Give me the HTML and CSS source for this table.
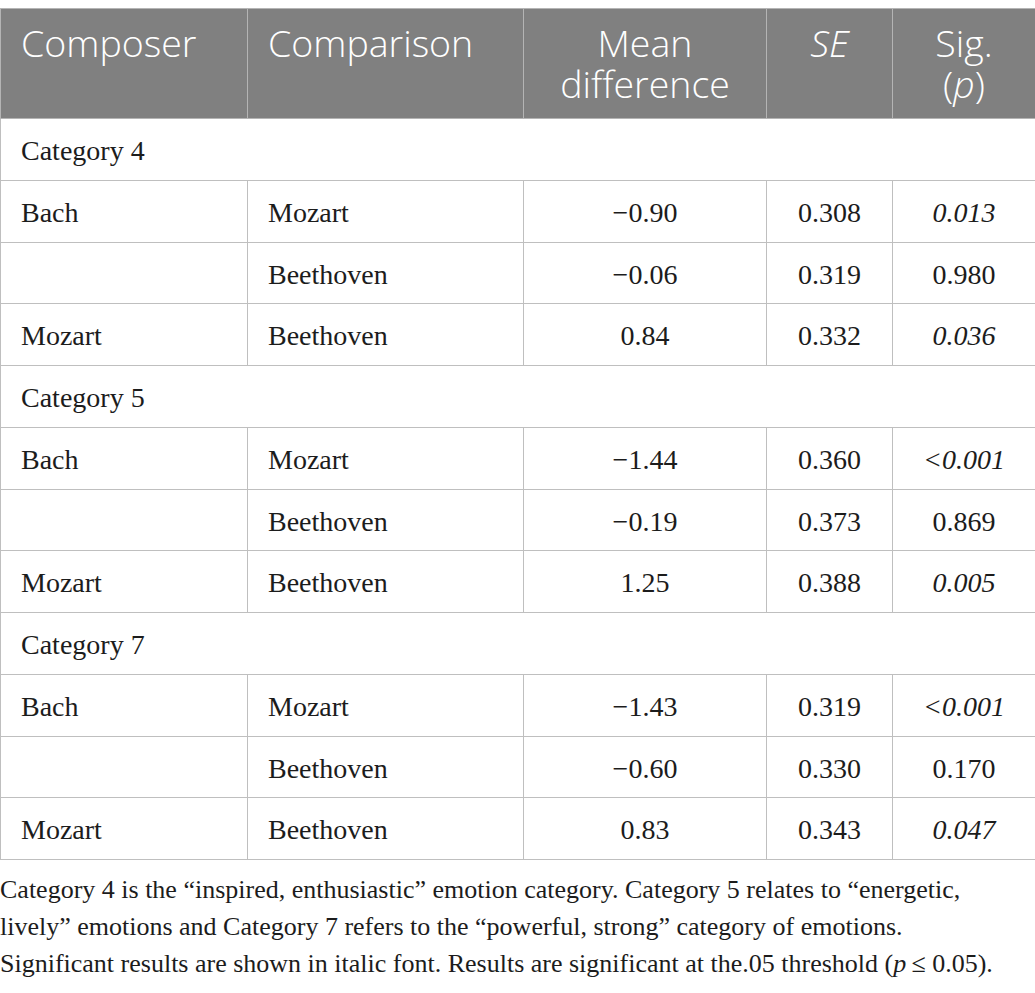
FILE: index.html
```html
<!DOCTYPE html>
<html lang="en">
<head>
<meta charset="utf-8">
<title>Table</title>
<link rel="stylesheet" href="styles.css">
</head>
<body>
<div class="page">
  <table class="data">
    <colgroup>
      <col class="c1"><col class="c2"><col class="c3"><col class="c4"><col class="c5">
    </colgroup>
    <thead>
      <tr>
        <th class="left">Composer</th>
        <th class="left">Comparison</th>
        <th>Mean difference</th>
        <th><i>SE</i></th>
        <th>Sig.<br>(<i>p</i>)</th>
      </tr>
    </thead>
    <tbody>
      <tr class="cat"><td colspan="5">Category 4</td></tr>
      <tr><td>Bach</td><td>Mozart</td><td class="num">−0.90</td><td class="num">0.308</td><td class="num sig">0.013</td></tr>
      <tr><td></td><td>Beethoven</td><td class="num">−0.06</td><td class="num">0.319</td><td class="num">0.980</td></tr>
      <tr><td>Mozart</td><td>Beethoven</td><td class="num">0.84</td><td class="num">0.332</td><td class="num sig">0.036</td></tr>
      <tr class="cat"><td colspan="5">Category 5</td></tr>
      <tr><td>Bach</td><td>Mozart</td><td class="num">−1.44</td><td class="num">0.360</td><td class="num sig">&lt;0.001</td></tr>
      <tr><td></td><td>Beethoven</td><td class="num">−0.19</td><td class="num">0.373</td><td class="num">0.869</td></tr>
      <tr><td>Mozart</td><td>Beethoven</td><td class="num">1.25</td><td class="num">0.388</td><td class="num sig">0.005</td></tr>
      <tr class="cat"><td colspan="5">Category 7</td></tr>
      <tr><td>Bach</td><td>Mozart</td><td class="num">−1.43</td><td class="num">0.319</td><td class="num sig">&lt;0.001</td></tr>
      <tr><td></td><td>Beethoven</td><td class="num">−0.60</td><td class="num">0.330</td><td class="num">0.170</td></tr>
      <tr><td>Mozart</td><td>Beethoven</td><td class="num">0.83</td><td class="num">0.343</td><td class="num sig">0.047</td></tr>
    </tbody>
  </table>
  <p class="note">Category 4 is the “inspired, enthusiastic” emotion category. Category 5 relates to “energetic,<br>lively” emotions and Category 7 refers to the “powerful, strong” category of emotions.<br>Significant results are shown in italic font. Results are significant at the.05 threshold (<i>p</i>&#8201;≤ 0.05).</p>
</div>
</body>
</html>
```

FILE: styles.css
```css
html, body {
  margin: 0;
  padding: 0;
  background: #ffffff;
}

.page {
  padding-top: 8px;
  width: 1035px;
}

.data {
  width: 1035px;
  border-collapse: collapse;
  table-layout: fixed;
  font-family: "Liberation Serif", "Times New Roman", serif;
  font-size: 28px;
  color: #1c1c1c;
}

.c1 { width: 247px; }
.c2 { width: 276px; }
.c3 { width: 243px; }
.c4 { width: 126px; }
.c5 { width: 143px; }

.data th {
  background: #808080;
  color: #ffffff;
  font-family: "Open Sans", "DejaVu Sans", sans-serif;
  font-weight: 350;
  font-size: 37.5px;
  line-height: 41px;
  text-align: center;
  vertical-align: top;
  padding: 13px 20px 14px 20px;
  border: 1px solid #b4b4b4;
}

.data th.left {
  text-align: left;
}

.data td {
  border: 1px solid #bfbfbf;
  padding: 17px 20px 13.75px 20px;
  line-height: 30px;
  height: 30px;
  text-align: left;
  vertical-align: top;
  white-space: nowrap;
}

.data td.num {
  text-align: center;
}

.data td.sig {
  font-style: italic;
}

.note {
  margin: 11px 0 0 0;
  font-family: "Liberation Serif", "Times New Roman", serif;
  font-size: 26px;
  line-height: 37px;
  color: #1c1c1c;
  white-space: nowrap;
}
```
